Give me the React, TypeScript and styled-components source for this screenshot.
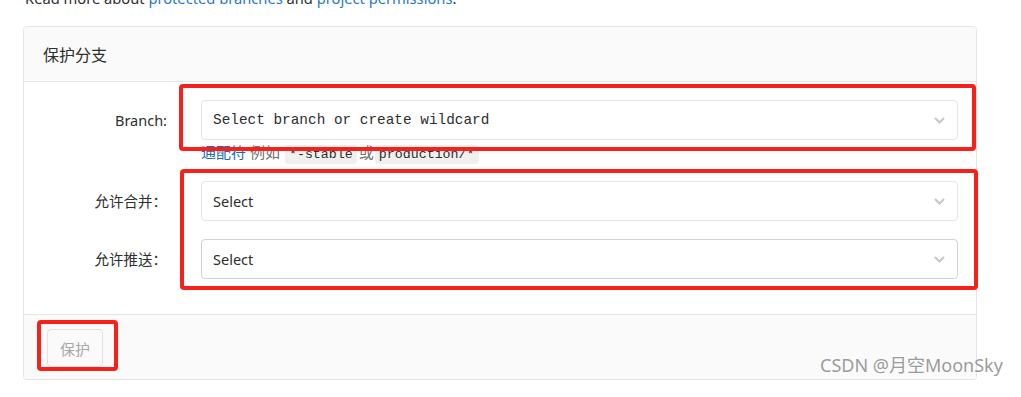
import React from "react"
import styled, { createGlobalStyle } from "styled-components"

const GlobalStyle = createGlobalStyle`
  * { box-sizing: border-box; }
  html, body {
    margin: 0;
    background: #fff;
    font-family: "Noto Sans", "Noto Sans CJK SC", sans-serif;
    color: #2e2e2e;
    overflow: hidden;
  }
`

const colors = {
  border: "#e5e5e5",
  panel: "#fafafa",
  text: "#2e2e2e",
  muted: "#707070",
  link: "#1f78d1",
  mark: "#f5211a",
}

const Page = styled.div`
  position: relative;
  height: 397px;
  padding-left: 23px;
`

const Intro = styled.p`
  margin: -12px 0 18px 2px;
  font-size: 14.7px;
  line-height: 20px;
`

const Link = styled.a`
  color: ${colors.link};
  text-decoration: none;
`

const Card = styled.section`
  width: 954px;
  border: 1px solid ${colors.border};
  border-radius: 4px;
`

const CardHeader = styled.header`
  height: 55px;
  display: flex;
  align-items: center;
  padding: 0 19px;
  background: ${colors.panel};
  border-bottom: 1px solid ${colors.border};
  border-radius: 4px 4px 0 0;
  font-size: 16px;
`

const CardBody = styled.div`
  display: flex;
  flex-direction: column;
  gap: 16px;
  padding: 18px 18px 35px 0;
`

const Group = styled.div`
  position: relative;
  display: flex;
  flex-direction: column;
  gap: 18px;
`

const Row = styled.div`
  display: grid;
  grid-template-columns: 143px 1fr;
  column-gap: 34px;
`

const Label = styled.label`
  text-align: right;
  font-size: 14.5px;
  line-height: 40px;
  white-space: nowrap;
`

const Field = styled.div`
  display: flex;
  flex-direction: column;
`

const SelectBox = styled.div<{ $mono?: boolean; $strong?: boolean }>`
  position: relative;
  height: 40px;
  display: flex;
  align-items: center;
  justify-content: space-between;
  padding: 0 12px 0 11px;
  border: 1px solid ${(p) => (p.$strong ? "#d2d2d2" : colors.border)};
  border-radius: 4px;
  background: #fff;
  font-family: ${(p) =>
    p.$mono ? `"Liberation Mono", "DejaVu Sans Mono", monospace` : "inherit"};
  font-size: ${(p) => (p.$mono ? "14.4px" : "14.5px")};
`

const Help = styled.div`
  margin-top: 2px;
  font-size: 15px;
  line-height: 20px;
  color: ${colors.muted};
  white-space: nowrap;
`

const HelpLink = styled.a`
  color: #1b69b6;
  text-decoration: none;
`

const Code = styled.code<{ $last?: boolean }>`
  margin: 0 ${(p) => (p.$last ? 0 : 2)}px 0 ${(p) => (p.$last ? 1 : 5)}px;
  padding: 2px 4px;
  border-radius: 3px;
  background: #f0f0f0;
  color: #2e2e2e;
  font-family: "Liberation Mono", "DejaVu Sans Mono", monospace;
  font-size: 13.3px;
`

const CardFooter = styled.footer`
  height: 65px;
  padding: 14px 23px;
  background: ${colors.panel};
  border-top: 1px solid ${colors.border};
  border-radius: 0 0 4px 4px;
`

const Button = styled.button`
  position: relative;
  height: 38px;
  padding: 0 12px;
  border: 1px solid #e0e0e0;
  border-radius: 4px;
  background: #fafafa;
  color: #a7a7a7;
  font-family: inherit;
  font-size: 15px;
`

const Mark = styled.span<{ $t: number; $r: number; $b: number; $l: number }>`
  position: absolute;
  z-index: 2;
  top: ${(p) => p.$t}px;
  right: ${(p) => p.$r}px;
  bottom: ${(p) => p.$b}px;
  left: ${(p) => p.$l}px;
  border: 4px solid ${colors.mark};
  border-radius: 4px;
  pointer-events: none;
`

const Watermark = styled.div`
  position: absolute;
  left: 820px;
  top: 366px;
  font-size: 18px;
  line-height: 22px;
  color: #9b9b9b;
  text-shadow: 0 0 2px #fff;
  white-space: nowrap;
`

function Chevron() {
  return (
    <svg width="11" height="7" viewBox="0 0 11 7">
      <polyline
        points="1,1 5.5,5.5 10,1"
        fill="none"
        stroke="#c6c6c6"
        strokeWidth="2"
      />
    </svg>
  )
}

export default function App() {
  return (
    <Page>
      <GlobalStyle />
      <Intro>
        Read more about <Link>protected branches</Link> and{" "}
        <Link>project permissions</Link>.
      </Intro>

      <Card>
        <CardHeader>保护分支</CardHeader>

        <CardBody>
          <Row>
            <Label>Branch:</Label>
            <Field>
              <SelectBox $mono>
                Select branch or create wildcard
                <Chevron />
                <Mark $t={-17} $r={-19} $b={-12} $l={-23} />
              </SelectBox>
              <Help>
                <HelpLink>通配符</HelpLink> 例如<Code>*-stable</Code>或
                <Code $last>production/*</Code>
              </Help>
            </Field>
          </Row>

          <Group>
            <Row>
              <Label>允许合并：</Label>
              <SelectBox>
                Select
                <Chevron />
              </SelectBox>
            </Row>
            <Row>
              <Label>允许推送：</Label>
              <SelectBox $strong>
                Select
                <Chevron />
              </SelectBox>
            </Row>
            <Mark $t={-12} $r={-20} $b={-11} $l={156} />
          </Group>
        </CardBody>

        <CardFooter>
          <Button disabled>
            保护
            <Mark $t={-10} $r={-16} $b={-5} $l={-11} />
          </Button>
        </CardFooter>
      </Card>

      <Watermark>CSDN @月空MoonSky</Watermark>
    </Page>
  )
}
